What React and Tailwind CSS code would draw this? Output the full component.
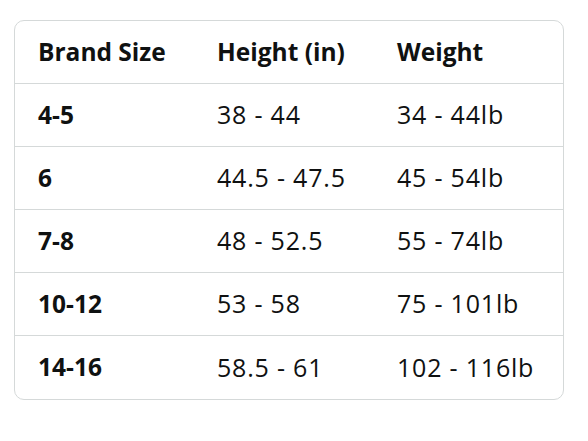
const rows = [
  ["4-5", "38 - 44", "34 - 44lb"],
  ["6", "44.5 - 47.5", "45 - 54lb"],
  ["7-8", "48 - 52.5", "55 - 74lb"],
  ["10-12", "53 - 58", "75 - 101lb"],
  ["14-16", "58.5 - 61", "102 - 116lb"],
];

export default function App() {
  return (
    <div className="w-[588px] h-[441px] bg-white pt-5 pl-[14px]" style={{ fontFamily: '"Open Sans", sans-serif' }}>
      <div className="w-[550px] border border-[#d5d9d9] rounded-[10px] text-[#0f1111]">
        <div className="grid grid-cols-[179px_180px_1fr] h-[63px] items-center pl-[23px] font-bold text-[24.5px] border-b border-[#d5d9d9]">
          <div>Brand Size</div>
          <div>Height (in)</div>
          <div>Weight</div>
        </div>
        {rows.map((r, i) => (
          <div
            key={r[0]}
            className={
              "grid grid-cols-[179px_180px_1fr] h-[63px] items-center pl-[23px] text-[25px] tracking-[0.8px] " +
              (i < rows.length - 1 ? "border-b border-[#d5d9d9]" : "")
            }
          >
            <div className="font-bold text-[24.5px] tracking-normal">{r[0]}</div>
            <div>{r[1]}</div>
            <div>{r[2]}</div>
          </div>
        ))}
      </div>
    </div>
  );
}
